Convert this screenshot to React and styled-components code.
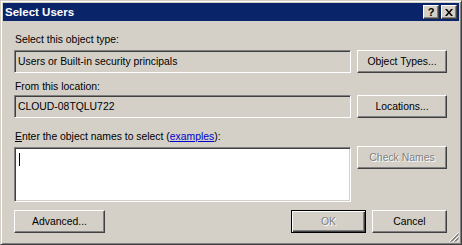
import React from 'react'
import styled, { createGlobalStyle } from 'styled-components'

const face = '#D4D0C8'
const shadow = '#808080'
const darkShadow = '#404040'

const GlobalStyle = createGlobalStyle`
  html, body {
    margin: 0;
    padding: 0;
    background: ${face};
  }
  body {
    font-family: "Liberation Sans", Arial, sans-serif;
    font-size: 10.4px;
  }
`

const Window = styled.div`
  box-sizing: border-box;
  width: 462px;
  height: 245px;
  padding: 2px;
  background: ${face};
  border: 1px solid;
  border-color: ${face} ${darkShadow} ${darkShadow} ${face};
  box-shadow: inset 1px 1px #fff, inset -1px -1px ${shadow};
  display: flex;
  flex-direction: column;
  position: relative;
`

const TitleBar = styled.div`
  height: 18px;
  background: #0a246a;
  display: flex;
  align-items: center;
  padding: 0 2px 0 2px;
`

const Title = styled.div`
  flex: 1;
  color: #fff;
  font-weight: bold;
  font-size: 11.5px;
`

const CaptionButton = styled.div`
  box-sizing: border-box;
  width: 16px;
  height: 14px;
  margin-left: ${p => (p.$gap ? '2px' : '0')};
  background: ${face};
  border: 1px solid;
  border-color: #fff ${darkShadow} ${darkShadow} #fff;
  box-shadow: inset -1px -1px ${shadow};
  display: flex;
  align-items: center;
  justify-content: center;
  font-weight: bold;
  font-size: 11px;
  line-height: 1;
  color: #000;
`

const Body = styled.div`
  flex: 1;
  padding: 12px 12px 0 11px;
  display: flex;
  flex-direction: column;
`

const Label = styled.div`
  padding-left: 1px;
  height: 13px;
  line-height: 13px;
  margin-top: ${p => p.$above || 0}px;
  margin-bottom: ${p => p.$below || 0}px;
  color: #000;
`

const Row = styled.div`
  display: flex;
  align-items: flex-start;
  gap: 6px;
`

const Field = styled.div`
  box-sizing: border-box;
  flex: 1;
  height: ${p => (p.$tall ? 55 : 23)}px;
  margin-top: ${p => p.$shift || 0}px;
  background: ${p => (p.$white ? '#fff' : face)};
  border: 1px solid;
  border-color: ${shadow} #fff #fff ${shadow};
  box-shadow: inset 1px 1px ${darkShadow}, inset -1px -1px ${face};
  padding: 4px 3px 0 3px;
  line-height: 13px;
  color: #000;
`

const Caret = styled.div`
  width: 1px;
  height: 13px;
  background: #000;
  margin-left: 1px;
  margin-top: 1px;
`

const Button = styled.div`
  box-sizing: border-box;
  width: ${p => p.$w || 90}px;
  height: 23px;
  margin-left: ${p => p.$left || 0}px;
  background: ${face};
  border: 1px solid;
  border-color: ${p => (p.$default ? '#000' : `#fff ${darkShadow} ${darkShadow} #fff`)};
  box-shadow: ${p =>
    p.$default
      ? `inset 1px 1px #fff, inset -1px -1px ${darkShadow}, inset -2px -2px ${shadow}`
      : `inset -1px -1px ${shadow}`};
  display: flex;
  align-items: center;
  justify-content: center;
  color: ${p => (p.$disabled ? shadow : '#000')};
  text-shadow: ${p => (p.$disabled ? '1px 1px #fff' : 'none')};
`

const Footer = styled.div`
  display: flex;
  margin-top: 8px;
`

const Spacer = styled.div`
  flex: 1;
`

const Link = styled.span`
  color: #0000cc;
  text-decoration: underline;
`

const Key = styled.span`
  text-decoration: underline;
`

const Grip = styled.svg`
  position: absolute;
  right: 2px;
  bottom: 2px;
`

function SizeGrip() {
  const lines = []
  ;[0, 4, 8].forEach(o => {
    lines.push(<line key={'w' + o} x1={12 - o - 0.5} y1="12.5" x2="12.5" y2={12 - o - 0.5} stroke="#fff" />)
    lines.push(<line key={'g' + o} x1={13 - o - 0.5} y1="12.5" x2="12.5" y2={13 - o - 0.5} stroke={shadow} />)
    lines.push(<line key={'h' + o} x1={14 - o - 0.5} y1="12.5" x2="12.5" y2={14 - o - 0.5} stroke={shadow} />)
  })
  return (
    <Grip width="13" height="13" viewBox="0 0 13 13">
      {lines}
    </Grip>
  )
}

export default function App() {
  return (
    <>
      <GlobalStyle />
      <Window>
        <TitleBar>
          <Title>Select Users</Title>
          <CaptionButton>?</CaptionButton>
          <CaptionButton $gap>
            <svg width="8" height="7" viewBox="0 0 8 7">
              <path d="M0 0h2l2 2.5L6 0h2L5 3.5 8 7H6L4 4.5 2 7H0l3-3.5z" fill="#000" />
            </svg>
          </CaptionButton>
        </TitleBar>
        <Body>
          <Label $below={4}>Select this object type:</Label>
          <Row>
            <Field>Users or Built-in security principals</Field>
            <Button>Object Types...</Button>
          </Row>
          <Label $above={7} $below={2}>From this location:</Label>
          <Row>
            <Field>CLOUD-08TQLU722</Field>
            <Button>Locations...</Button>
          </Row>
          <Label $above={12} $below={3}>
            <Key>E</Key>nter the object names to select (<Link>examples</Link>):
          </Label>
          <Row>
            <Field $white $tall $shift={1}>
              <Caret />
            </Field>
            <Button $disabled>Check Names</Button>
          </Row>
          <Footer>
            <Button $w={91}>Advanced...</Button>
            <Spacer />
            <Button $default $disabled $w={75}>OK</Button>
            <Button $w={75} $left={6}>Cancel</Button>
          </Footer>
        </Body>
        <SizeGrip />
      </Window>
    </>
  )
}
